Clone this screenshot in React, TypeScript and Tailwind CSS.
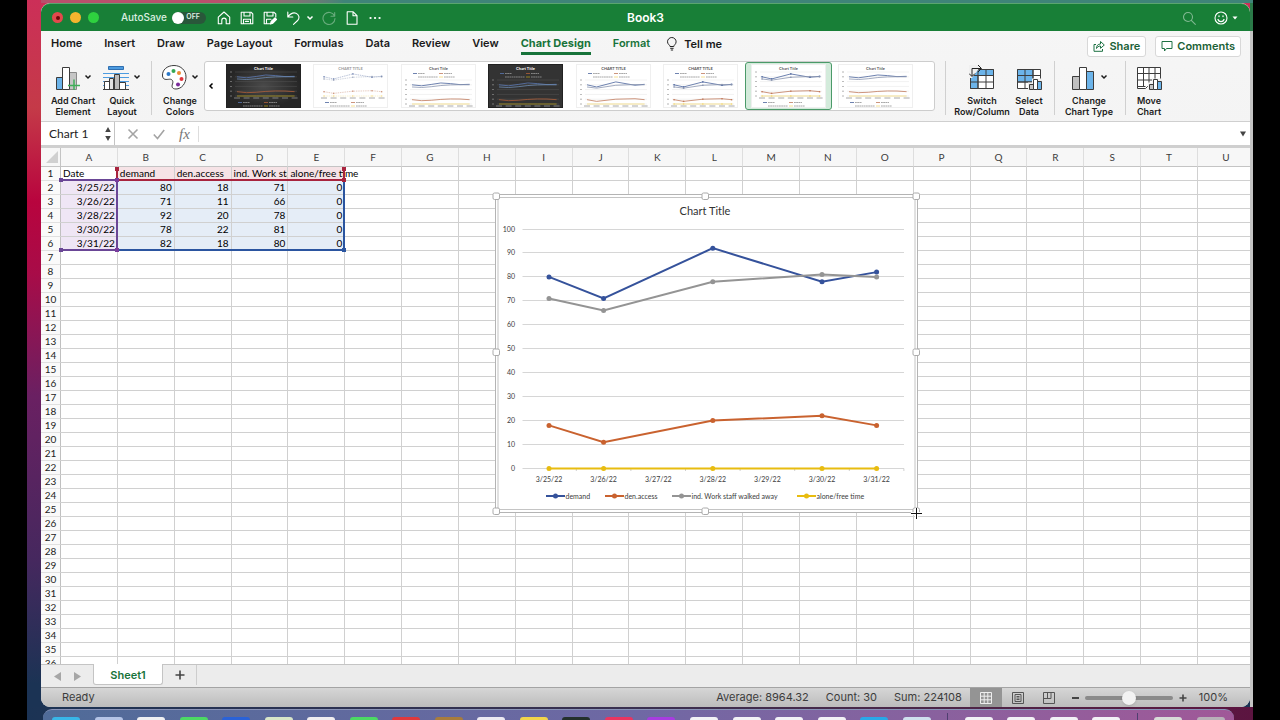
import { useState } from "react"
import type { ReactNode } from "react"
import clsx from "clsx"

const TABS = ["Home", "Insert", "Draw", "Page Layout", "Formulas", "Data", "Review", "View", "Chart Design", "Format"]

const COLUMNS = "ABCDEFGHIJKLMNOPQRSTU".split("")

const SHEET: string[][] = [
  ["Date", "demand", "den.access", "ind. Work staff", "alone/free time"],
  ["3/25/22", "80", "18", "71", "0"],
  ["3/26/22", "71", "11", "66", "0"],
  ["3/28/22", "92", "20", "78", "0"],
  ["3/30/22", "78", "22", "81", "0"],
  ["3/31/22", "82", "18", "80", "0"],
]

const SERIES = [
  { name: "demand", color: "#35529b", values: [80, 71, 92, 78, 82] },
  { name: "den.access", color: "#c9622f", values: [18, 11, 20, 22, 18] },
  { name: "ind. Work staff walked away", color: "#949494", values: [71, 66, 78, 81, 80] },
  { name: "alone/free time", color: "#e8bc10", values: [0, 0, 0, 0, 0] },
]

// day offset of every row, the axis is a date axis
const DAYS = [0, 1, 3, 5, 6]
const DATES = ["3/25/22", "3/26/22", "3/27/22", "3/28/22", "3/29/22", "3/30/22", "3/31/22"]
const LEGEND_X = [546, 605, 672, 797]

const DOCK = [
  "bg-[#38b6e8]", "bg-[#b4c4e6]", "bg-[#eef0f2]", "bg-[#4cd964]", "bg-[#2a62d8]", "bg-[#d8e6c8]", "bg-[#f0eef0]",
  "bg-[#4cd964]", "bg-[#e0383c]", "bg-[#a87c3c]", "bg-[#eceaf2]", "bg-[#f2d44a]", "bg-[#24302c]", "bg-[#ea3560]",
  "bg-[#a83ce0]", "bg-[#f2f2f6]", "bg-[#f2f2f6]", "bg-[#f2f2f6]", "bg-[#f2f2f6]", "bg-[#28a8e8]", "bg-[#cfe0ee]",
  "", "bg-[#f2f2f6]", "bg-[#f2f2f6]", "bg-[#f2f2f6]", "bg-[#f2f2f6]", "", "bg-[#d8dcd8]", "bg-[#b8b0b8]",
]

function Caret({ className = "" }: { className?: string }) {
  return (
    <svg viewBox="0 0 8 6" className={clsx("h-[6px] w-2 shrink-0", className)} fill="none" stroke="currentColor" strokeWidth="1.5">
      <path d="M1.5 1.5 4 4l2.5-2.5" />
    </svg>
  )
}

function TitleIcon({ label, className = "", children }: { label: string; className?: string; children: ReactNode }) {
  return (
    <button type="button" aria-label={label} className={clsx("shrink-0 text-white", className)}>
      <svg viewBox="0 0 14 14" className="size-[14px]" fill="none" stroke="currentColor" strokeWidth="1.1" strokeLinejoin="round" strokeLinecap="round">
        {children}
      </svg>
    </button>
  )
}

function TitleBar() {
  const [autoSave, setAutoSave] = useState(false)

  return (
    <header className="relative flex h-7 shrink-0 items-center rounded-t-[9px] border-t border-[#5aa56f] bg-[#187f37] pl-[11px] pr-3 text-white">
      <div className="flex gap-[7px]">
        <button type="button" aria-label="Close" className="flex size-[11px] items-center justify-center rounded-full bg-[#e2494c]">
          <span className="size-1 rounded-full bg-[#6e0509]" />
        </button>
        <button type="button" aria-label="Minimize" className="size-[11px] rounded-full bg-[#f5b42e]" />
        <button type="button" aria-label="Zoom window" className="size-[11px] rounded-full bg-[#2ed13f]" />
      </div>
      <label className="relative ml-[22px] flex items-center gap-[5px] text-[10px] font-medium text-[#dcefe1]">
        AutoSave
        <input
          type="checkbox"
          checked={autoSave}
          onChange={(e) => setAutoSave(e.target.checked)}
          className="h-3 w-[34px] appearance-none rounded-full bg-[#29573a] before:block before:size-3 before:rounded-full before:bg-white"
        />
        <span className="absolute right-[6px] text-[7px] font-semibold">OFF</span>
      </label>
      <div className="ml-[11px] flex items-center gap-[9px]">
        <TitleIcon label="Home">
          <path d="M1.300 6.200 7 1l5.700 5.200v6.600H9.200V9.300a2.200 2.200 0 0 0-4.400 0v3.500H1.300z" />
        </TitleIcon>
        <TitleIcon label="Save">
          <path d="M1.200 1.200h9.800l1.800 1.800v9.800H1.200zM4 1.200v3.800h6V1.200M3.500 12.800V8.200h7v4.600M5.500 10.400h3" />
        </TitleIcon>
        <TitleIcon label="Save As">
          <path d="M7 12.800H1.200V1.200h9.600l2 1.800V6M4 1.200v3.800h6V1.200M3.500 12.800V8.200h4.500" />
          <path d="M7.500 13 8.200 10.500 12 6.800l1.600 1.600-3.700 3.800z" fill="currentColor" />
        </TitleIcon>
        <TitleIcon label="Undo">
          <path d="M1.800 1v5h5M2 5.800C4 3.200 7 1 10 2.200s4 5 1.600 7.300L7.500 13.300" />
        </TitleIcon>
        <Caret className="-ml-[3px] -mr-px" />
        <TitleIcon label="Redo" className="opacity-35">
          <path d="M12.700 1.500v3.700H9M12.500 5A6 6 0 1 0 13 7.500" />
        </TitleIcon>
        <TitleIcon label="New">
          <path d="M2.200.8h6l3.800 3.800v8.600H2.200zM8 .8v4h4" />
        </TitleIcon>
        <TitleIcon label="More">
          <path d="M2.500 7h.1M7 7h.1M11.500 7h.1" strokeWidth="2.200" />
        </TitleIcon>
      </div>
      <h1 className="absolute left-1/2 -translate-x-1/2 text-xs font-semibold">Book3</h1>
      <div className="ml-auto flex items-center">
        <TitleIcon label="Search" className="opacity-45">
          <circle cx="6" cy="6" r="4.500" />
          <path d="m9.300 9.300 4 4" />
        </TitleIcon>
        <TitleIcon label="Feedback" className="ml-[18px]">
          <circle cx="7" cy="7" r="6" />
          <path d="M4 8.500a3.200 3.200 0 0 0 6 0M5 5v.6M9 5v.6" strokeWidth="1.300" />
        </TitleIcon>
        <svg viewBox="0 0 6 4" className="ml-1 h-1 w-[6px]">
          <path d="M.5.5h5L3 3.500z" fill="#fff" />
        </svg>
      </div>
    </header>
  )
}

function TabRow() {
  return (
    <div className="flex h-[26px] shrink-0 items-center gap-[22px] pl-[10px] pr-[9px] text-[11px] font-semibold text-[#1a1a1a]">
      {TABS.map((tab) => (
        <button
          key={tab}
          type="button"
          className={clsx(
            "h-[21px] whitespace-nowrap border-b-[3px] pt-px",
            tab === "Chart Design" ? "border-[#17733a] font-bold text-[#17733a]" : "border-transparent",
            tab === "Format" && "text-[#17733a]"
          )}
        >
          {tab}
        </button>
      ))}
      <button type="button" className="-ml-[6px] flex items-center gap-[6px]">
        <svg viewBox="0 0 12 14" className="h-[14px] w-3" fill="none" stroke="#222">
          <path d="M4 9.500C4 8 1.500 7.300 1.500 4.800a4.300 4.300 0 0 1 8.600 0C10.100 7.300 7.800 8 7.800 9.500zM4.200 11.300h3.400M4.800 13h2.300" />
        </svg>
        Tell me
      </button>
      <div className="ml-auto flex gap-[9px] pt-1 text-[11px] font-semibold text-[#1b6137]">
        <button type="button" className="flex h-[21px] items-center gap-1 rounded-[3px] border border-[#d8d8d8] bg-white px-[5px]">
          <svg viewBox="0 0 12 12" className="size-3" fill="none" stroke="#1f7244">
            <path d="M3 4.500H1v6.800h8.500V9M3.500 8.500C3.500 5.500 5 4 7.500 4V1.500L11.300 5 7.500 8.300V6C5.500 6 4.300 7 3.500 8.500z" />
          </svg>
          Share
        </button>
        <button type="button" className="flex h-[21px] items-center gap-1 rounded-[3px] border border-[#d8d8d8] bg-white px-[5px]">
          <svg viewBox="0 0 12 12" className="size-3" fill="none" stroke="#1f7244">
            <path d="M1 1.500h10v7H5.500L3.500 11V8.500H1z" />
          </svg>
          Comments
        </button>
      </div>
    </div>
  )
}

function RibbonButton({ lines, className, caret, children }: { lines: [string, string]; className: string; caret?: boolean; children: ReactNode }) {
  return (
    <button type="button" className={clsx("flex shrink-0 flex-col items-center text-[9px] font-semibold leading-[11px] text-[#1c1c1c]", className)}>
      <span className="mb-[3px] flex h-[31px] items-center gap-1">
        <svg viewBox="0 0 26 26" className="size-[26px]" fill="none" stroke="#3c3c3c" strokeWidth="1">
          {children}
        </svg>
        {caret && <Caret />}
      </span>
      <span className="whitespace-nowrap">{lines[0]}</span>
      <span className="whitespace-nowrap">{lines[1]}</span>
    </button>
  )
}

function Separator({ className }: { className: string }) {
  return <div className={clsx("h-[54px] w-px shrink-0 bg-[#d0d0d0]", className)} />
}

type ThumbProps = {
  title: string
  dark?: "gradient" | "flat"
  top?: boolean
  markers?: boolean
  smooth?: boolean
  faded?: boolean
}

const THUMBS: ThumbProps[] = [
  { title: "Chart Title", dark: "gradient", smooth: true },
  { title: "CHART TITLE", markers: true, faded: true },
  { title: "Chart Title", top: true, smooth: true },
  { title: "Chart Title", dark: "flat", top: true, smooth: true },
  { title: "CHART TITLE", top: true },
  { title: "CHART TITLE", top: true, markers: true },
  { title: "Chart Title", markers: true },
  { title: "Chart Title", smooth: true },
]

function StyleThumb({ title, dark, top, markers, smooth, faded }: ThumbProps) {
  const y0 = top ? 40 : 32
  const px = (i: number) => 11 + DAYS[i] * 9.6
  const py = (v: number) => y0 - v * 0.24
  const legendY = top ? 9 : 38
  const ink = dark ? "#c4c4c4" : "#666"
  const colors = dark ? ["#5a78b4", "#b0603a", "#6f8bb0", "#b09a20"] : ["#4a639c", "#c07a5c", "#8a96b0", "#f2d878"]

  return (
    <svg viewBox="0 0 75 44" className="h-11 w-[75px] font-[Lato,sans-serif]">
      <defs>
        <radialGradient id="slate">
          <stop offset="0" stopColor="#4a4a4a" />
          <stop offset="1" stopColor="#262626" />
        </radialGradient>
      </defs>
      <rect x=".5" y=".5" width="74" height="43" fill={dark === "gradient" ? "url(#slate)" : dark ? "#333" : "#fff"} stroke={dark ? "#222" : "#efefef"} />
      <text x="37.500" y="5.500" fontSize="4" fontWeight="700" textAnchor="middle" fill={dark ? "#fff" : faded ? "#999" : "#555"}>
        {title}
      </text>
      {!faded &&
        [0, 20, 40, 60, 80, 100].map((v) => (
          <g key={v}>
            <path d={`M9 ${py(v)}H71`} stroke={dark ? "#555" : "#e4e4e4"} strokeWidth=".5" />
            <path d={`M4 ${py(v)}h2`} stroke={ink} strokeWidth=".8" opacity=".6" />
          </g>
        ))}
      <path d={`M8 ${y0 + 2}H72`} stroke={ink} strokeWidth=".8" strokeDasharray="6 3.600" opacity=".7" />
      {SERIES.map((s, n) => {
        const pts = s.values.map((v, i) => [px(i), py(v)])
        const d = smooth
          ? `M${pts[0]}Q${pts[1]} ${(pts[1][0] + pts[2][0]) / 2} ${(pts[1][1] + pts[2][1]) / 2}Q${pts[2]} ${(pts[2][0] + pts[3][0]) / 2} ${(pts[2][1] + pts[3][1]) / 2}T${pts[4]}`
          : `M${pts.join("L")}`
        return (
          <g key={s.name} opacity={faded ? 0.75 : 1}>
            <path d={d} fill="none" stroke={colors[n]} strokeWidth={faded ? 0.5 : 0.8} strokeDasharray={faded ? "1.500 .8" : undefined} />
            {markers && pts.map(([x, y]) => <rect key={x} x={x - 0.7} y={y - 0.7} width="1.400" height="1.400" fill={colors[n]} />)}
          </g>
        )
      })}
      <path d={`M12 ${legendY + 0.5}h4`} stroke={colors[0]} strokeWidth=".8" />
      <path d={`M17 ${legendY + 0.5}h7M43 ${legendY + 0.5}h8M17 ${legendY + 4}h20M43 ${legendY + 4}h11`} stroke={ink} strokeWidth=".8" strokeDasharray="1.800 .4" opacity=".7" />
      <path d={`M38 ${legendY + 0.5}h4`} stroke={colors[1]} strokeWidth=".8" />
      <path d={`M38 ${legendY + 4}h4`} stroke={colors[3]} strokeWidth=".8" />
    </svg>
  )
}

function Ribbon() {
  const [style, setStyle] = useState(6)

  return (
    <div className="flex h-[64px] shrink-0 pt-1">
      <RibbonButton lines={["Add Chart", "Element"]} className="w-16" caret>
        <path d="M2.500 13.500h6v12h-6z" fill="#6cb4ea" />
        <path d="M15.500 8.500h7v17h-7z" fill="#c6c6c6" stroke="#8a8a8a" />
        <path d="M8.500 3.500h7v22h-7z" fill="#fff" />
        <path d="M20 15.500v12M14 21.500h12" stroke="#3fae58" strokeWidth="1.500" />
      </RibbonButton>
      <RibbonButton lines={["Quick", "Layout"]} className="w-[34px]" caret>
        <path d="M5.500 2.500h15v3h-15z" fill="#4c9be0" stroke="#2f6fb0" />
        <path d="M0 9.500h26M0 13.500h26M0 17.500h26M0 21.500h26" stroke="#4c9be0" />
        <path d="M1.500 25.500v-8h5v8M16.500 25.500v-7h6v7" fill="#fff" />
        <path d="M6.500 14.500h4v11h-4z" fill="#e4e4e4" />
        <path d="M11.500 10.500h5v15h-5z" fill="#bdbdbd" />
        <path d="M0 25.500h26" />
      </RibbonButton>
      <Separator className="ml-3" />
      <RibbonButton lines={["Change", "Colors"]} className="ml-1 w-12" caret>
        <path d="M1.500 12C1 6 6 1.500 13 1.500c7 0 12 5 12 11.500s-4.500 12-10 12c-4 0-4.500-2.500-3.500-5s0-5-3-4.800c-3 .3-6.500 1-7-3.200z" fill="#fff" />
        <g stroke="none">
          <circle cx="7.500" cy="10" r="2" fill="#2b78c8" />
          <circle cx="12.500" cy="7" r="2" fill="#35a853" />
          <circle cx="18" cy="9" r="2" fill="#ee8b32" />
          <circle cx="20.500" cy="15" r="2" fill="#e0353c" />
          <circle cx="17" cy="20.500" r="2" fill="#7a2a9a" />
        </g>
      </RibbonButton>
      <div className="flex h-[50px] flex-1 items-center rounded-[3px] border border-[#cdcdcd] bg-white pl-[2px] pr-[21px]">
        <button type="button" aria-label="Previous styles" className="flex w-[19px] items-center text-black">
          <Caret className="rotate-90" />
        </button>
        <div className="flex flex-1 justify-between">
          {THUMBS.map((thumb, i) => (
            <button key={i} type="button" aria-label={`Style ${i + 1}`} onClick={() => setStyle(i)} className="relative">
              {style === i && <span className="absolute -inset-x-[6px] -inset-y-[2px] rounded-[3px] border border-[#4b9a69] bg-[#d3ebdb]" />}
              <span className="relative block">
                <StyleThumb {...thumb} />
              </span>
            </button>
          ))}
        </div>
      </div>
      <Separator className="ml-[10px]" />
      <RibbonButton lines={["Switch", "Row/Column"]} className="ml-2 w-14">
        <path d="M1.500 5.500h23v19h-23z" fill="#fff" />
        <path d="M1.500 5.500h23v6h-23zM1.500 11.500h7.500v13H1.500z" fill="#6cb4ea" />
        <path d="M1.500 18h23M9 5.500v19M17 5.500v19M1.500 11.500h23" />
        <path d="M0 1h12.500L3 14H0z" fill="#f0f0f0" stroke="none" />
        <path d="M3 12V4.500h9M0 9.500 3 12.500l3-3M9 1l3.500 3.500L9 8" stroke="#222" />
      </RibbonButton>
      <RibbonButton lines={["Select", "Data"]} className="w-[38px]">
        <path d="M1.500 5.500h23v19h-23z" fill="#fff" />
        <path d="M1.500 5.500h15.500v12.500H1.500z" fill="#6cb4ea" />
        <path d="M1.500 11.500h23M1.500 18h23M9 5.500v19M17 5.500v19" />
        <path d="M12 18.500h4v-4h10V27H12z" fill="#f0f0f0" stroke="none" />
        <path d="M13.500 20.500h4v5h-4z" fill="#c6c6c6" />
        <path d="M17.500 15.500h4v10h-4z" fill="#fff" />
        <path d="M21.500 17.500h4v8h-4z" fill="#6cb4ea" />
      </RibbonButton>
      <Separator className="ml-[6px]" />
      <RibbonButton lines={["Change", "Chart Type"]} className="ml-2 w-[52px]" caret>
        <path d="M2.500 12.500h7v13h-7z" fill="#c0c0c0" />
        <path d="M16.500 7.500h7v18h-7z" fill="#6cb4ea" />
        <path d="M9.500 3.500h7v22h-7z" fill="#fff" />
      </RibbonButton>
      <Separator className="ml-[10px]" />
      <RibbonButton lines={["Move", "Chart"]} className="ml-[6px] mr-[84px] w-[34px]">
        <path d="M1.500 3.500h23v19h-13l-2 2h-8z" fill="#fff" />
        <path d="M1.500 9.500h23M1.500 16h23M7.500 3.500v19M13 3.500v19M19 3.500v19M1.500 22.500h8" />
        <path d="M12 18.500h4v-4h10V27H12z" fill="#f0f0f0" stroke="none" />
        <path d="M13.500 20.500h4v5h-4z" fill="#c6c6c6" />
        <path d="M17.500 15.500h4v10h-4z" fill="#fff" />
        <path d="M21.500 17.500h4v8h-4z" fill="#6cb4ea" />
      </RibbonButton>
    </div>
  )
}

function FormulaBar() {
  const [name, setName] = useState("Chart 1")
  const [formula, setFormula] = useState("")

  return (
    <div className="flex h-[27px] shrink-0 items-center border-y border-b-[3px] border-[#cfcfcf] bg-white">
      <div className="flex h-full w-[74px] shrink-0 items-center border-r border-[#c4c4c4]">
        <input
          aria-label="Name box"
          value={name}
          onChange={(e) => setName(e.target.value)}
          className="w-16 bg-transparent pl-2 font-[Lato,sans-serif] text-xs leading-4 text-[#222] outline-none"
        />
        <svg viewBox="0 0 6 16" className="h-4 w-[6px]" fill="#444">
          <path d="M.2 6 3 1l2.800 5zM.2 10 3 15l2.800-5z" />
        </svg>
      </div>
      <div className="flex items-center gap-[14px] border-r border-[#ddd] pl-3 pr-2 text-[#a4a4a4]">
        <button type="button" aria-label="Cancel">
          <svg viewBox="0 0 12 12" className="size-3" fill="none" stroke="currentColor" strokeWidth="1.600">
            <path d="m1.500 1.500 9 9M10.500 1.500l-9 9" />
          </svg>
        </button>
        <button type="button" aria-label="Enter">
          <svg viewBox="0 0 12 12" className="size-3" fill="none" stroke="currentColor" strokeWidth="1.600">
            <path d="m.8 6.500 3.700 4 6.700-8.500" />
          </svg>
        </button>
        <button type="button" aria-label="Insert function" className="font-['Liberation_Serif',serif] text-[15px] italic leading-4 text-[#777]">
          fx
        </button>
      </div>
      <input aria-label="Formula" value={formula} onChange={(e) => setFormula(e.target.value)} className="min-w-0 flex-1 px-2 text-xs outline-none" />
      <svg viewBox="0 0 6 5" className="mr-1 h-[6px] w-[6px]" fill="#444">
        <path d="M0 0h6L3 5z" />
      </svg>
    </div>
  )
}

// fill and outline of the ranges the chart reads: dates, series names, values
function rangeClass(row: number, col: number) {
  if (row === 0 && col >= 1 && col <= 4) return "bg-[#f6e3e6]"
  if (row >= 1 && row <= 5 && col === 0) return "bg-[#efe6f5]"
  if (row >= 1 && row <= 5 && col >= 1 && col <= 4) return "bg-[#e5edf7]"
  return ""
}

function RangeEdges({ row, col }: { row: number; col: number }) {
  if (row > 5 || col > 4) return null
  const line = "pointer-events-none absolute z-10"
  const handle = "pointer-events-none absolute z-20 size-1"
  return (
    <>
      {row === 0 && col === 0 && <span className={clsx(line, "-bottom-px left-0 right-0 h-[2px] bg-[#6a4696]")} />}
      {row === 0 && col > 0 && <span className={clsx(line, "-bottom-px -right-px left-0 h-[2px] bg-[#a8243e]")} />}
      {row === 0 && col === 1 && <span className={clsx(line, "-left-[2px] bottom-0 top-0 w-[2px] bg-[#a8243e]")} />}
      {row === 0 && col === 4 && <span className={clsx(line, "-right-px bottom-0 top-0 w-[2px] bg-[#a8243e]")} />}
      {row > 0 && col === 0 && <span className={clsx(line, "-bottom-px -right-px top-0 w-[2px] bg-[#6a4696]")} />}
      {row > 0 && col === 4 && <span className={clsx(line, "-bottom-px -right-px top-0 w-[2px] bg-[#2b55a0]")} />}
      {row === 5 && <span className={clsx(line, "-bottom-px -right-px left-0 h-[2px]", col === 0 ? "bg-[#6a4696]" : "bg-[#2b55a0]")} />}
      {(row === 0 || row === 5) && col === 0 && (
        <>
          <span className={clsx(handle, "-bottom-[2px] -left-[2px] bg-[#6a4696]")} />
          <span className={clsx(handle, "-bottom-[2px] -right-[2px] bg-[#7a3c9c]")} />
        </>
      )}
      {row === 0 && col === 4 && (
        <>
          <span className={clsx(handle, "-right-[2px] top-0 bg-[#a8243e]")} />
          <span className={clsx(handle, "-bottom-[2px] -right-[2px] bg-[#a8243e]")} />
        </>
      )}
      {row === 0 && col === 1 && <span className={clsx(handle, "-left-[3px] top-0 bg-[#a8243e]")} />}
      {row === 5 && col === 4 && <span className={clsx(handle, "-bottom-[2px] -right-[2px] bg-[#2b55a0]")} />}
    </>
  )
}

function ChartObject() {
  const px = (day: number) => 549 + day * 54.6
  const py = (v: number) => 468.5 - v * 2.395

  return (
    <svg viewBox="490 190 435 332" className="absolute left-[449px] top-[42px] z-30 h-[332px] w-[435px] font-[Lato,sans-serif]" fill="#3c3c3c">
      <rect x="495.500" y="194.500" width="422" height="318" rx="3" fill="#fff" stroke="#b4b4b4" />
      <rect x="498" y="197.500" width="417" height="312" fill="#fff" stroke="#c4c4c4" />
      <text x="705" y="214.500" fontSize="11" textAnchor="middle" fill="#333">
        Chart Title
      </text>
      {[0, 10, 20, 30, 40, 50, 60, 70, 80, 90, 100].map((v) => (
        <g key={v}>
          <path d={`M522.500 ${Math.floor(py(v)) + 0.5}H904`} stroke="#d6d6d6" />
          <text x="515" y={py(v) + 2.5} fontSize="7" textAnchor="end">
            {v}
          </text>
        </g>
      ))}
      {DATES.map((date, i) => (
        <g key={date}>
          <path d={`M${px(i) + 27.3} 468.500v2.500`} stroke="#d0d0d0" />
          <text x={px(i)} y="481.500" fontSize="7" textAnchor="middle">
            {date}
          </text>
        </g>
      ))}
      {SERIES.map((s) => (
        <g key={s.name} fill={s.color}>
          <path d={`M${s.values.map((v, i) => `${px(DAYS[i])} ${py(v)}`).join("L")}`} fill="none" stroke={s.color} strokeWidth="2" />
          {s.values.map((v, i) => (
            <circle key={i} cx={px(DAYS[i])} cy={py(v)} r="2.500" />
          ))}
        </g>
      ))}
      {SERIES.map((s, i) => (
        <g key={s.name}>
          <path d={`M${LEGEND_X[i]} 496h19`} stroke={s.color} strokeWidth="2" />
          <circle cx={LEGEND_X[i] + 9.5} cy="496" r="2.500" fill={s.color} />
          <text x={LEGEND_X[i] + 19.5} y="498.500" fontSize="7">
            {s.name}
          </text>
        </g>
      ))}
      {[496, 705, 916].map((x) =>
        [196, 352, 511].map(
          (y) => !(x === 705 && y === 352) && <rect key={`${x}-${y}`} x={x - 3} y={y - 3} width="6.500" height="6.500" rx="1.500" fill="#fff" stroke="#ababab" />
        )
      )}
      <path d="M911 513.500h11M916.500 508v11" stroke="#fff" strokeWidth="3" />
      <path d="M911 513.500h11M916.500 508v11" stroke="#111" />
    </svg>
  )
}

function Sheet() {
  return (
    <main className="relative min-h-0 flex-1 overflow-hidden bg-white">
      <table className="w-[calc(100%+5px)] table-fixed border-separate border-spacing-0 font-[Lato,sans-serif] text-[10px] leading-[13px] text-black">
        <colgroup>
          <col className="w-5" />
          {COLUMNS.map((c) => (
            <col key={c} />
          ))}
        </colgroup>
        <thead>
          <tr className="h-[19px] bg-[#f7f7f7] text-[#3c3c3c]">
            <th className="relative border-b border-r border-[#c4c4c4] p-0">
              <svg viewBox="0 0 12 12" className="absolute bottom-[3px] right-[2px] size-3" fill="#d0d0d0">
                <path d="M12 0v12H0z" />
              </svg>
            </th>
            {COLUMNS.map((c) => (
              <th key={c} scope="col" className="border-b border-r border-b-[#c4c4c4] border-r-[#dedede] p-0 font-normal">
                {c}
              </th>
            ))}
          </tr>
        </thead>
        <tbody>
          {Array.from({ length: 36 }, (_, row) => (
            <tr key={row} className="h-[14px]">
              <th scope="row" className="border-b border-r border-b-[#e0e0e0] border-r-[#c0c0c0] bg-[#fafafa] p-0 font-normal text-[#222]">
                {row + 1}
              </th>
              {COLUMNS.map((c, col) => (
                <td key={c} className={clsx("relative h-[14px] whitespace-nowrap border-b border-r border-[#d0d0d0] p-0", rangeClass(row, col))}>
                  {SHEET[row]?.[col] && (
                    <div className={clsx("h-[13px] px-[2px]", row > 0 && "text-right", c !== "E" && "overflow-hidden")}>{SHEET[row][col]}</div>
                  )}
                  <RangeEdges row={row} col={col} />
                </td>
              ))}
            </tr>
          ))}
        </tbody>
      </table>
      <ChartObject />
    </main>
  )
}

function SheetTabs() {
  return (
    <nav className="flex h-[23px] shrink-0 items-start border-t border-[#c4c4c4] bg-[#ececec]">
      <div className="flex h-full w-[52px] items-center gap-[13px] pl-[13px]">
        <button type="button" aria-label="Previous sheet">
          <svg viewBox="0 0 7 9" className="h-[9px] w-[7px]" fill="#a6a6a6">
            <path d="M7 0v9L0 4.500z" />
          </svg>
        </button>
        <button type="button" aria-label="Next sheet">
          <svg viewBox="0 0 7 9" className="h-[9px] w-[7px]" fill="#a6a6a6">
            <path d="M0 0v9l7-4.500z" />
          </svg>
        </button>
      </div>
      <button type="button" className="-mt-px h-[21px] w-[70px] rounded-b-[3px] border border-t-0 border-[#c4c4c4] bg-white pt-[2px] text-[11px] font-semibold leading-4 text-[#17733a]">
        Sheet1
      </button>
      <button type="button" aria-label="Add sheet" className="flex h-[20px] w-[34px] items-center justify-center border-r border-[#cdcdcd]">
        <svg viewBox="0 0 10 10" className="size-[10px]" stroke="#444" strokeWidth="1.600">
          <path d="M5 .5v9M.5 5h9" />
        </svg>
      </button>
    </nav>
  )
}

function StatusBar() {
  const [zoom, setZoom] = useState(100)

  return (
    <footer className="flex h-5 shrink-0 items-center border-t border-[#a4a4a4] bg-linear-to-b from-[#d6d6d6] to-[#bcbcbc] pl-[21px] pr-[22px] text-[11px] text-[#3c3c3c]">
      <span>Ready</span>
      <div className="ml-auto mr-2 flex gap-[17px]">
        <span>Average: 8964.32</span>
        <span>Count: 30</span>
        <span>Sum: 224108</span>
      </div>
      <button type="button" aria-label="Normal view" className="flex h-[19px] w-8 items-center justify-center bg-[#949494]">
        <svg viewBox="0 0 12 12" className="size-3" fill="none" stroke="#eee">
          <path d="M.5.5h11v11H.5zM4.200.5v11M7.800.5v11M.5 4.200h11M.5 7.800h11" />
        </svg>
      </button>
      <button type="button" aria-label="Page layout view" className="flex h-[19px] w-8 items-center justify-center">
        <svg viewBox="0 0 12 12" className="size-3" fill="none" stroke="#555">
          <path d="M.5.5h11v11H.5zM3 2.500h6v7H3zM4.500 4.500h3M4.500 6h3M4.500 7.500h3" />
        </svg>
      </button>
      <button type="button" aria-label="Page break preview" className="flex h-[19px] w-[30px] items-center justify-center">
        <svg viewBox="0 0 12 12" className="size-3" fill="none" stroke="#555">
          <path d="M.5.5h11v11H.5zM.5 6.500h7.500v-6M4.500.5v6" />
        </svg>
      </button>
      <button type="button" aria-label="Zoom out" className="ml-2 h-[2px] w-[7px] bg-[#444]" />
      <input
        type="range"
        aria-label="Zoom"
        min={0}
        max={200}
        value={zoom}
        onChange={(e) => setZoom(Number(e.target.value))}
        className="mx-[6px] h-1 w-[88px] appearance-none rounded-full bg-[#8a8a8a] [&::-webkit-slider-thumb]:size-[14px] [&::-webkit-slider-thumb]:appearance-none [&::-webkit-slider-thumb]:rounded-full [&::-webkit-slider-thumb]:bg-[#f2f2f2] [&::-webkit-slider-thumb]:shadow-sm"
      />
      <button type="button" aria-label="Zoom in">
        <svg viewBox="0 0 8 8" className="size-2" stroke="#444" strokeWidth="1.600">
          <path d="M4 .5v7M.5 4h7" />
        </svg>
      </button>
      <span className="ml-3">{zoom}%</span>
    </footer>
  )
}

function Dock() {
  return (
    <div className="mr-[19px] mt-[2px] flex h-[11px] shrink-0 items-end justify-between overflow-hidden rounded-t-[9px] border-t border-[#8a94b8] bg-linear-to-r from-[#4f6b98] via-[#6f68a4] to-[#a05898] px-[9px]">
      {DOCK.map((color, i) =>
        color ? <span key={i} className={clsx("h-[3px] w-7 rounded-t-[3px]", color)} /> : <span key={i} className="mx-[2px] h-[7px] w-px bg-[#4f3f70]" />
      )}
    </div>
  )
}

export default function App() {
  return (
    <div className="flex h-screen overflow-hidden bg-black px-[27px] font-[Inter,sans-serif]">
      <div className="relative flex min-w-0 flex-1 flex-col bg-[linear-gradient(#cc2f58,#c43a48_15%,#b8043e_28%,#a80c48_38%,#6a2062_55%,#45285e_78%,#1b3354_95%)] pl-[14px]">
        <div className="h-[3px] shrink-0 bg-linear-to-r from-[#b8506c] from-15% to-[#3f8478] to-25%" />
        <div className="flex min-h-0 flex-1">
          <div className="flex min-w-0 flex-1 flex-col overflow-hidden rounded-[9px] bg-linear-to-b from-[#f6f6f6] to-[#ebebeb]">
            <TitleBar />
            <TabRow />
            <Ribbon />
            <FormulaBar />
            <Sheet />
            <SheetTabs />
            <StatusBar />
          </div>
          {/* edge of the window behind */}
          <div className="w-[3px] shrink-0 bg-linear-to-b from-[#2a7a48] from-4% to-[#c4c4c4] to-4%" />
        </div>
        <div className="-ml-[14px] bg-linear-to-r from-[#1b3354] via-[#3a3050] to-[#5c1440] pl-4">
          <Dock />
        </div>
      </div>
    </div>
  )
}
